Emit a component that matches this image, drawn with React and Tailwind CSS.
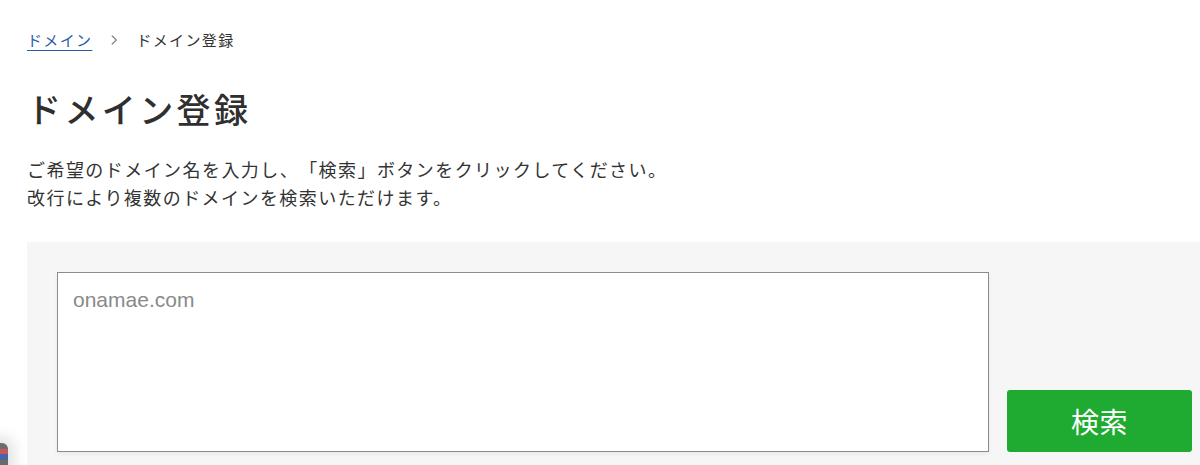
import React from "react";

const jp = {
  fontFamily:
    '"Noto Sans CJK JP", "Noto Sans", "Liberation Sans", sans-serif',
};

function App() {
  return (
    <div
      className="relative w-[1200px] h-[465px] overflow-hidden bg-white text-[#333333] [text-spacing-trim:space-all]"
      style={jp}
    >
      <div className="pl-[27px] pt-[29px]">
        {/* パンくず */}
        <nav className="flex items-center text-[15px] leading-[22px] tracking-[0.09em]">
          <a href="#" className="text-[#2b5aa8] underline underline-offset-[4px] decoration-[1px]">
            ドメイン
          </a>
          <svg
            className="w-[14px] h-[14px] mx-[15px] text-[#8a8a8a]"
            fill="none"
            stroke="currentColor"
            viewBox="0 0 24 24"
          >
            <path
              strokeLinecap="round"
              strokeLinejoin="round"
              strokeWidth="2.4"
              d="M9 5l7 7-7 7"
            ></path>
          </svg>
          <span className="text-[#333333]">ドメイン登録</span>
        </nav>

        {/* タイトル */}
        <h1 className="mt-[36px] text-[34px] leading-[44px] tracking-[0.1em] font-medium text-[#2f2f2f]">
          ドメイン登録
        </h1>

        {/* 説明文 */}
        <p className="mt-[24px] text-[18px] leading-[28px] tracking-[0.08em] text-[#333333]">
          ご希望のドメイン名を入力し、「検索」ボタンをクリックしてください。
          <br />
          改行により複数のドメインを検索いただけます。
        </p>

        {/* 検索パネル */}
        <div className="mt-[31px] w-[1200px] bg-[#f6f6f6] p-[30px] flex items-end gap-[18px]">
          <textarea
            className="w-[932px] h-[180px] bg-white border-[1.5px] border-[#8c8c8c] px-[15px] py-[13px] text-[21px] leading-[28px] text-[#333] placeholder:text-[#8a8a8a] resize-none outline-none shadow-[0_2px_4px_rgba(0,0,0,0.06)]"
            style={{ fontFamily: '"Liberation Sans", Arial, sans-serif' }}
            placeholder="onamae.com"
          ></textarea>
          <button className="w-[185px] h-[62px] rounded-[3px] bg-[#1faa31] text-white text-[28px] tracking-[0.02em] flex items-center justify-center">
            検索
          </button>
        </div>
      </div>

      {/* 左下のウィジェット */}
      <div className="absolute left-[-12px] top-[443px] w-[20px] h-[40px] rounded-[6px] bg-[#6b6b6b] shadow-[0_0_14px_6px_rgba(0,0,0,0.12)] overflow-hidden">
        <div className="mt-[6px] h-[5px] bg-[#c4585a]"></div>
        <div className="h-[6px] bg-[#4a64a8]"></div>
      </div>
    </div>
  );
}

export default App;
